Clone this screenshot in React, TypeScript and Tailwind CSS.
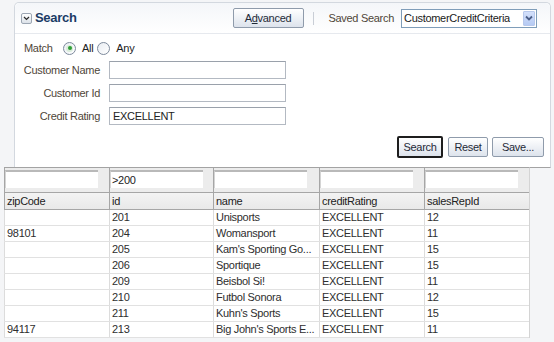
import React from "react";

const ROWS = [
  ["", "201", "Unisports", "EXCELLENT", "12"],
  ["98101", "204", "Womansport", "EXCELLENT", "11"],
  ["", "205", "Kam's Sporting Go...", "EXCELLENT", "15"],
  ["", "206", "Sportique", "EXCELLENT", "15"],
  ["", "209", "Beisbol Si!", "EXCELLENT", "11"],
  ["", "210", "Futbol Sonora", "EXCELLENT", "12"],
  ["", "211", "Kuhn's Sports", "EXCELLENT", "15"],
  ["94117", "213", "Big John's Sports E...", "EXCELLENT", "11"],
];

const COLS = ["zipCode", "id", "name", "creditRating", "salesRepId"];
const FILTERS = ["", ">200", "", "", ""];
const WIDTHS = ["w-[105px]", "w-[104px]", "w-[106px]", "w-[105px]", "w-[105px]"];

function Radio({ checked }: { checked?: boolean }) {
  return (
    <span className="w-[13px] h-[13px] rounded-full border border-[#7d8a9c] bg-linear-to-br from-[#e9edf2] to-white flex items-center justify-center">
      {checked && (
        <span className="w-[7px] h-[7px] rounded-full bg-[#d9ecd9] flex items-center justify-center">
          <span className="w-[4px] h-[4px] rounded-full bg-[#2f9e36]" />
        </span>
      )}
    </span>
  );
}

function Field({ label, value }: { label: string; value?: string }) {
  return (
    <div className="flex items-center h-[18px] mt-[5px]">
      <span className="w-[85px] text-right text-[#4f4639]">{label}</span>
      <div className="ml-[9px] w-[177px] h-[18px] bg-white border border-[#b3b9c2] border-t-[#9aa1ab] flex items-center pl-[3px] text-[#222]">
        {value}
      </div>
    </div>
  );
}

const btn =
  "h-[20px] bg-linear-to-b from-white to-[#dde3ec] border border-[#8f9bab] rounded-[2px] text-[#1f2a38] flex items-center justify-center";

export default function App() {
  return (
    <div className="w-[554px] h-[342px] bg-[#f4f5f7] overflow-hidden font-['Liberation_Sans',Arial,sans-serif] text-[11px] tracking-[-0.3px]">
      {/* search panel */}
      <div className="pt-[2px] pl-[14px]">
        <div className="w-[537px] bg-white border border-[#d3d8df] border-b-[#a3a3a3] rounded-t-[5px]">
          <div className="h-[31px] flex items-center justify-between border-b border-[#e6e9ee] bg-linear-to-b from-[#f4f6f9] to-white rounded-t-[5px] pl-[6px] pr-[13px]">
            <div className="flex items-center">
              <span className="w-[11px] h-[11px] rounded-[2px] border border-[#9ca6b3] bg-linear-to-b from-white to-[#dbe1e8] flex items-center justify-center">
                <svg width="7" height="5" viewBox="0 0 7 5">
                  <path d="M1 1 L3.5 3.5 L6 1" stroke="#2b2b2b" strokeWidth="1.2" fill="none" />
                </svg>
              </span>
              <span className="ml-[3px] text-[13px] font-bold text-[#1b3c66]">Search</span>
            </div>
            <div className="flex items-center">
              <button className={`${btn} w-[71px]`}>
                A<span className="underline">d</span>vanced
              </button>
              <span className="ml-[9px] w-px h-[13px] bg-[#c9ced6]" />
              <span className="ml-[15px] text-[#4f4639]">Saved Search</span>
              <div className="ml-[7px] w-[136px] h-[19px] border border-[#7f9db9] bg-white flex items-center justify-between pl-[2px] pr-px text-[#1a1a1a]">
                <span>CustomerCreditCriteria</span>
                <span className="w-[12px] h-[15px] bg-linear-to-b from-[#d3e0fb] to-[#b6caf3] border border-[#b7c8ec] rounded-[1px] flex items-center justify-center">
                  <svg width="8" height="6" viewBox="0 0 8 6">
                    <path d="M1 1.5 L4 4.5 L7 1.5" stroke="#4c5f88" strokeWidth="1.8" fill="none" />
                  </svg>
                </span>
              </div>
            </div>
          </div>

          <div className="h-[133px] flex flex-col">
            <div className="mt-[6px] h-[16px] flex items-center pl-[9px]">
              <span className="w-[39px] text-[#4f4639]">Match</span>
              <Radio checked />
              <span className="ml-[6px] text-[#222]">All</span>
              <span className="ml-[4px]" />
              <Radio />
              <span className="ml-[6px] text-[#222]">Any</span>
            </div>
            <Field label="Customer Name" />
            <Field label="Customer Id" />
            <Field label="Credit Rating" value="EXCELLENT" />
            <div className="mt-[11px] h-[22px] flex items-center justify-end pr-[6px]">
              <button className="w-[46px] h-[22px] bg-linear-to-b from-white to-[#dde3ec] border-2 border-[#1e1e1e] rounded-[2px] text-[#1f2a38] flex items-center justify-center">
                Search
              </button>
              <button className={`${btn} ml-[5px] w-[40px]`}>Reset</button>
              <button className={`${btn} ml-[4px] w-[52px]`}>Save...</button>
            </div>
          </div>
        </div>
      </div>

      {/* results table */}
      <div className="pl-[4px] -mt-px">
        <div className="w-[526px] border-t border-t-[#a3a3a3] border-r border-r-[#d4d4d4]">
          <div className="flex h-[25px] bg-[#ececec] border-b border-[#a6a6a6]">
            {FILTERS.map((f, i) => (
              <div key={i} className={`${WIDTHS[i]} border-l border-[#a6a6a6] pt-[2px]`}>
                <div className="w-[93px] h-[18px] bg-white border-t-2 border-t-[#b9b9b9] border-l border-l-[#d4d4d4] flex items-center pl-[1px] text-[#222]">
                  {f}
                </div>
              </div>
            ))}
          </div>
          <div className="flex h-[17px] bg-linear-to-b from-[#f3f3f3] to-[#e9e9e9] border-b border-[#a6a6a6]">
            {COLS.map((c, i) => (
              <div key={i} className={`${WIDTHS[i]} border-l border-[#a6a6a6] pl-[2px] flex items-center text-[#222]`}>
                {c}
              </div>
            ))}
          </div>
          {ROWS.map((r, ri) => (
            <div key={ri} className="flex h-[16px] bg-white border-b border-[#e1e1e1]">
              {r.map((v, i) => (
                <div
                  key={i}
                  className={`${WIDTHS[i]} border-l border-[#dcdcdc] pl-[2px] flex items-center whitespace-nowrap overflow-hidden text-[#2e2e2e]`}
                >
                  {v}
                </div>
              ))}
            </div>
          ))}
        </div>
      </div>
    </div>
  );
}
